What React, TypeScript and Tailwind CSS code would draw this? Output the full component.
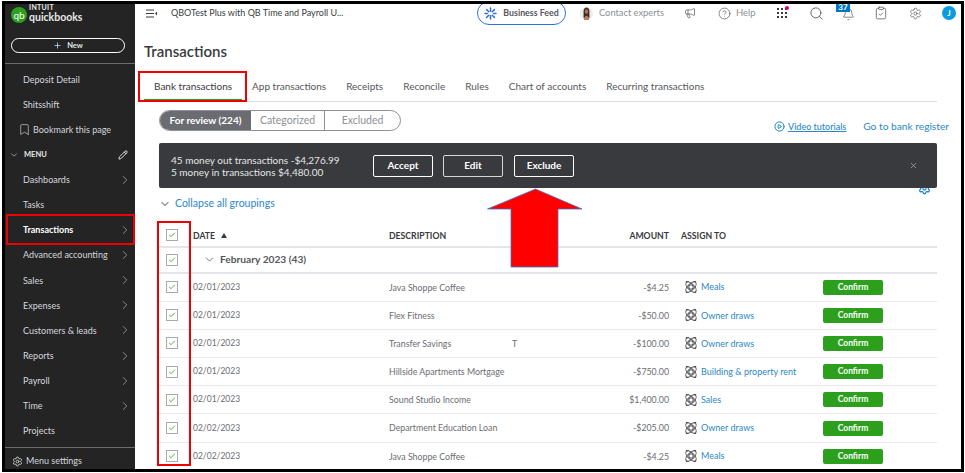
import { Bell, Bookmark, Check, ChevronDown, ChevronRight, CirclePlay, CircleHelp, ClipboardCheck, Megaphone, Pencil, Plus, Search, Settings, X } from "lucide-react";

const navTop = ["Deposit Detail", "Shitsshift"];

const menu = [
  { label: "Dashboards", arrow: true },
  { label: "Tasks", arrow: false },
  { label: "Transactions", arrow: true, active: true },
  { label: "Advanced accounting", arrow: true },
  { label: "Sales", arrow: true },
  { label: "Expenses", arrow: true },
  { label: "Customers & leads", arrow: true },
  { label: "Reports", arrow: true },
  { label: "Payroll", arrow: true },
  { label: "Time", arrow: true },
  { label: "Projects", arrow: false },
];

const tabs = ["Bank transactions", "App transactions", "Receipts", "Reconcile", "Rules", "Chart of accounts", "Recurring transactions"];

const rows = [
  { date: "02/01/2023", desc: "Java Shoppe Coffee", amount: "-$4.25", assign: "Meals" },
  { date: "02/01/2023", desc: "Flex Fitness", amount: "-$50.00", assign: "Owner draws" },
  { date: "02/01/2023", desc: "Transfer Savings", amount: "-$100.00", assign: "Owner draws", mark: true },
  { date: "02/01/2023", desc: "Hillside Apartments Mortgage", amount: "-$750.00", assign: "Building & property rent" },
  { date: "02/01/2023", desc: "Sound Studio Income", amount: "$1,400.00", assign: "Sales" },
  { date: "02/02/2023", desc: "Department Education Loan", amount: "-$205.00", assign: "Owner draws" },
  { date: "02/02/2023", desc: "Java Shoppe Coffee", amount: "-$4.25", assign: "Meals" },
];

function RowCheck() {
  return (
    <div className="w-[34px] shrink-0 pl-[7px]">
      <div className="flex h-[12px] w-[12px] items-center justify-center border border-[#a8a9ad] bg-white">
        <Check size={8} strokeWidth={2.5} className="text-[#2ca01c]" />
      </div>
    </div>
  );
}

function SplitIcon() {
  return (
    <svg width="14" height="14" viewBox="0 0 15 15" fill="none" stroke="#55565b" strokeWidth="1.1" className="shrink-0">
      <ellipse cx="7.5" cy="7.5" rx="7" ry="3.4" transform="rotate(45 7.5 7.5)" />
      <ellipse cx="7.5" cy="7.5" rx="7" ry="3.4" transform="rotate(-45 7.5 7.5)" />
      <circle cx="7.5" cy="7.5" r="2.4" />
      <path d="M2 1.5h3M10 1.5h3M2 13.5h3M10 13.5h3" />
    </svg>
  );
}

function FeedIcon() {
  return (
    <svg width="13" height="13" viewBox="0 0 13 13" fill="none" stroke="#2f6fe0" strokeWidth="1.5" strokeLinecap="round">
      <path d="M6.5 1v3.2M6.5 8.8V12M1 6.5h2.4M9.6 6.5H12M2.6 2.6l2.2 2.2M10.4 2.6L8.2 4.8M2.6 10.4l2.2-2.2M10.4 10.4L8.2 8.2" />
    </svg>
  );
}

function Avatar() {
  return (
    <svg width="13" height="15" viewBox="0 0 13 15" className="shrink-0">
      <circle cx="6.5" cy="7.5" r="6.5" fill="#ececec" />
      <path d="M3.6 12V5.2C3.6 3 5 1.6 6.5 1.6S9.4 3 9.4 5.2V12z" fill="#3d2a22" />
      <ellipse cx="6.5" cy="5.6" rx="1.7" ry="2.3" fill="#a9745a" />
      <path d="M3.8 14c.2-2.6 1.3-4.2 2.7-4.2s2.5 1.6 2.7 4.2z" fill="#b0806a" />
    </svg>
  );
}

function Sidebar() {
  return (
    <aside className="flex w-[130px] shrink-0 flex-col bg-[#242424] text-[9px] text-[#d4d7dc]">
      <div className="flex h-[30px] items-start pl-[6px] pt-[3px]">
        <div className="flex h-[16px] w-[16px] items-center justify-center rounded-full bg-[#2ca01c] text-[10px] leading-none text-white">qb</div>
        <div className="ml-[2px] -mt-[3px] leading-none">
          <div className="text-[7px] font-bold tracking-[0.3px] text-[#e8e8e8]">INTUIT</div>
          <div className="mt-[1px] text-[10.5px] font-bold text-[#e8e8e8]">quickbooks</div>
        </div>
      </div>
      <div className="mx-[6px] mt-[4px] flex h-[15px] w-[114px] items-center justify-center gap-[5px] rounded-full border border-white text-[7.5px] font-bold text-[#dfe6ee]">
        <Plus size={9} className="text-[#bfe0ff]" />
        New
      </div>
      <div className="mt-[10px] border-t border-[#6b6c72]" />
      <div className="mt-[3px] flex flex-col">
        {navTop.map((item) => (
          <div key={item} className="flex h-[25.1px] items-center pl-[18px]">{item}</div>
        ))}
        <div className="flex h-[25.1px] items-center pl-[13px]">
          <Bookmark size={13} strokeWidth={1.3} className="mr-[2px] text-[#c8c9cc]" />
          Bookmark this page
        </div>
        <div className="flex h-[25.1px] items-center justify-between pl-[4px] pr-[7px]">
          <span className="flex items-center gap-[5px] text-[7.5px] font-bold text-[#e8e8e8]">
            <ChevronDown size={10} className="text-[#a8a9ad]" />
            MENU
          </span>
          <Pencil size={10} className="text-white" />
        </div>
        {menu.map((item) => (
          <div key={item.label} className={"flex h-[25.1px] items-center justify-between whitespace-nowrap pl-[18px] pr-[3px] " + (item.active ? "font-bold text-white" : "")}>
            {item.label}
            {item.arrow && <ChevronRight size={14} strokeWidth={1.3} className="text-[#a8a9ad]" />}
          </div>
        ))}
      </div>
      <div className="mt-[4px] flex flex-1 items-center gap-[3px] border-t border-[#6b6c72] pl-[7px] pt-[5px]">
        <Settings size={11} className="text-[#c8c9cc]" />
        Menu settings
      </div>
    </aside>
  );
}

function TopBar() {
  return (
    <div className="flex h-[18px] items-center text-[9px] text-[#55565b]">
      <div className="ml-[11px] flex w-[25px] shrink-0 items-center">
        <svg width="11" height="9" viewBox="0 0 11 9" fill="none" stroke="#393a3d" strokeWidth="1">
          <path d="M0 1h8M0 4.5h8M0 8h8" />
          <path d="M11 2.5L9 4.5l2 2z" fill="#393a3d" stroke="none" />
        </svg>
      </div>
      <div className="w-[306px] shrink-0 whitespace-nowrap text-[#393a3d]">QBOTest Plus with QB Time and Payroll U...</div>
      <div className="flex h-[24px] w-[89px] shrink-0 items-center justify-center gap-[6px] rounded-full border border-[#2f6fe0] text-[8.8px] font-bold">
        <FeedIcon />
        Business Feed
      </div>
      <div className="ml-[14px] flex w-[83px] shrink-0 items-center gap-[6px] whitespace-nowrap text-[9.3px] text-[#8d9096]">
        <Avatar />
        Contact experts
      </div>
      <Megaphone size={12} strokeWidth={1.4} className="ml-[21px] shrink-0" />
      <div className="ml-[22px] flex w-[40px] shrink-0 items-center gap-[5px] text-[9.5px] text-[#8d9096]">
        <CircleHelp size={13} strokeWidth={1.3} className="text-[#55565b]" />
        Help
      </div>
      <div className="relative ml-[19px] grid h-[10px] w-[10px] shrink-0 grid-cols-3 gap-[2px]">
        {[0, 1, 2, 3, 4, 5, 6, 7, 8].map((n) => (
          <span key={n} className="h-[2px] w-[2px] bg-[#393a3d]" />
        ))}
        <span className="absolute -right-[2px] -top-[2px] h-[4px] w-[4px] rounded-full bg-[#d6006e]" />
      </div>
      <Search size={15} strokeWidth={1.4} className="ml-[22px] shrink-0" />
      <div className="relative ml-[18px] shrink-0 pt-[2px]">
        <Bell size={13} strokeWidth={1.3} />
        <span className="absolute -left-[6px] -top-[3px] flex h-[9px] w-[14px] items-center justify-center bg-[#0077c5] text-[8px] font-bold leading-none text-white">37</span>
      </div>
      <ClipboardCheck size={14} strokeWidth={1.3} className="ml-[19px] shrink-0" />
      <Settings size={13} strokeWidth={1.3} className="ml-[21px] shrink-0" />
      <div className="ml-[20px] flex h-[14px] w-[14px] shrink-0 items-center justify-center rounded-full bg-[#0d9be0] text-[8px] font-bold text-white">J</div>
    </div>
  );
}

function Tabs() {
  return (
    <div className="ml-[9px] mr-[24px] mt-[7px] flex h-[30px] items-end gap-[20px] border-b border-[#dcdde0] pl-[10px] text-[10px] text-[#55565b]">
      {tabs.map((tab, i) => (
        <div key={tab} className={"relative flex h-[29px] items-center whitespace-nowrap " + (i === 0 ? "text-[#393a3d]" : "")}>
          {tab}
          {i === 0 && <span className="absolute -left-[10px] -right-[10px] bottom-[0px] h-[2px] bg-[#2ca01c]" />}
        </div>
      ))}
    </div>
  );
}

function Filters() {
  return (
    <div className="ml-[24px] mr-[12px] mt-[8px] flex h-[21px] items-end justify-between text-[10.5px]">
      <div className="flex h-[21px] w-[242px] overflow-hidden rounded-full border border-[#8d9096] text-[#8d9096]">
        <div className="flex w-[91px] items-center justify-center bg-[#6b6c72] text-[10px] font-bold text-white">For review (224)</div>
        <div className="flex w-[74px] items-center justify-center border-r border-[#8d9096]">Categorized</div>
        <div className="flex flex-1 items-center justify-center">Excluded</div>
      </div>
      <div className="-mb-[3px] flex items-center text-[#2b87c9]">
        <CirclePlay size={11} className="mr-[3px] text-[#0077c5]" />
        <span className="text-[9px] font-medium underline">Video tutorials</span>
        <span className="ml-[17px] text-[10.2px]">Go to bank register</span>
      </div>
    </div>
  );
}

function Banner() {
  return (
    <div className="relative z-10 ml-[24px] mr-[24px] mt-[12px] flex h-[45px] items-center rounded-[2px] bg-[#393a3d] pl-[12px] text-[#e3e5e8]">
      <div className="w-[202px] shrink-0 whitespace-nowrap text-[10px] leading-[12px]">
        <div>45 money out transactions -$4,276.99</div>
        <div>5 money in transactions $4,480.00</div>
      </div>
      <div className="flex h-[22px] w-[60px] items-center justify-center rounded-[2px] border border-white text-[10px] font-bold text-white">Accept</div>
      <div className="ml-[10px] flex h-[22px] w-[60px] items-center justify-center rounded-[2px] border border-[#d4d7dc] text-[10px] font-bold text-white">Edit</div>
      <div className="ml-[11px] flex h-[22px] w-[60px] items-center justify-center rounded-[2px] border border-white text-[10px] font-bold text-white">Exclude</div>
      <X size={9} className="ml-[335px] text-[#a8a9ad]" />
    </div>
  );
}

function Table() {
  return (
    <div className="ml-[24px] mr-[24px] mt-[10px] text-[8.8px] text-[#6b6c72]">
      <div className="flex h-[25.5px] items-center border-b-2 border-[#e3e5e8] pt-[3px] text-[8.7px] font-bold text-[#393a3d]">
        <RowCheck />
        <div className="flex w-[196px] items-center gap-[6px]">
          DATE
          <span className="h-0 w-0 border-x-[3.5px] border-b-[5px] border-x-transparent border-b-[#393a3d]" />
        </div>
        <div className="w-[210px]">DESCRIPTION</div>
        <div className="w-[70px] text-right">AMOUNT</div>
        <div className="ml-[12px]">ASSIGN TO</div>
      </div>
      <div className="flex h-[26px] items-center border-b-2 border-[#e3e5e8]">
        <RowCheck />
        <div className="ml-[10px] flex items-center gap-[4px] text-[10.2px] font-bold text-[#55565b]">
          <ChevronDown size={13} strokeWidth={1.4} />
          February 2023 (43)
        </div>
      </div>
      {rows.map((row, i) => (
        <div key={i} className="flex h-[28.2px] items-center border-b border-[#e8e9ec]">
          <RowCheck />
          <div className="w-[196px] text-[8.5px]">{row.date}</div>
          <div className="relative w-[210px] whitespace-nowrap">
            {row.desc}
            {row.mark && <span className="absolute left-[123px] top-0">T</span>}
          </div>
          <div className="w-[70px] text-right">{row.amount}</div>
          <div className="ml-[15px] flex w-[139px] items-center gap-[3px] whitespace-nowrap text-[9px] text-[#2b87c9]">
            <SplitIcon />
            {row.assign}
          </div>
          <div className="flex h-[15px] w-[60px] items-center justify-center rounded-[2px] bg-[#2ca01c] text-[8.5px] font-bold text-white">Confirm</div>
        </div>
      ))}
    </div>
  );
}

export default function App() {
  return (
    <div className="relative h-[473px] w-[965px] overflow-hidden bg-white font-['Lato',sans-serif]">
      <div className="ml-[2px] mt-[1px] flex h-[471px] w-[962px] overflow-hidden border-[3px] border-black bg-white">
        <Sidebar />
        <main className="min-w-0 flex-1">
          <TopBar />
          <h1 className="ml-[9px] mt-[15px] h-[28px] text-[15px] font-semibold leading-[28px] text-[#393a3d]">Transactions</h1>
          <Tabs />
          <Filters />
          <Banner />
          <div className="relative ml-[24px] mr-[12px] mt-[8px] flex h-[16px] items-center text-[10.5px] text-[#2b87c9]">
            <ChevronDown size={12} className="mr-[4px] text-[#393a3d]" />
            Collapse all groupings
            <Settings size={13} className="absolute right-[18px] -top-[14px] text-[#0077c5]" />
          </div>
          <Table />
        </main>
      </div>

      {/* annotations drawn on top of the screenshot */}
      <div className="absolute left-[138px] top-[71px] h-[31px] w-[109px] border-2 border-[#f00000]" />
      <div className="absolute left-[504px] top-[145px] h-[38px] w-[79px] border-2 border-[#f00000]" />
      <div className="absolute left-[6px] top-[214px] h-[31px] w-[129px] border-2 border-[#f00000]" />
      <div className="absolute left-[157px] top-[221px] h-[245px] w-[34px] border-2 border-[#f00000]" />
      <svg className="absolute left-[485px] top-[187px]" width="100" height="82" viewBox="0 0 100 82">
        <path d="M50.5 2L2.5 22H26V80H73V22H97z" fill="#ff0000" stroke="#4472c4" strokeWidth="0.8" />
      </svg>
    </div>
  );
}
